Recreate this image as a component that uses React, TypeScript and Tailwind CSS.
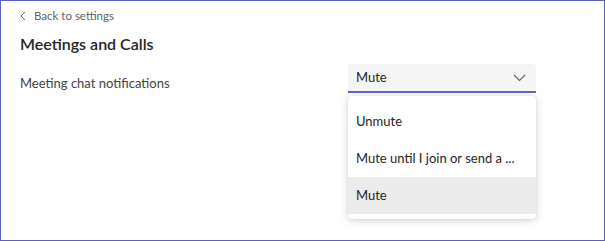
import React from "react";

export default function App() {
  return (
    <div className="w-[605px] h-[241px] bg-white border border-[#5b5fc0] relative overflow-hidden" style={{ fontFamily: "Lato, 'Noto Sans', sans-serif" }}>
      <div className="pl-[19px] pt-[8px]">
        <div className="flex items-center gap-[8px] h-[14px] text-[11.5px] text-[#616161]">
          <svg width="6" height="10" viewBox="0 0 6 10" className="ml-[0px]">
            <path d="M5 1 L1 5 L5 9" fill="none" stroke="#616161" strokeWidth="1" />
          </svg>
          <span>Back to settings</span>
        </div>
        <div className="mt-[10px] text-[16px] font-semibold text-[#242424] leading-[22px]">Meetings and Calls</div>
        <div className="mt-[9px] flex">
          <div className="w-[328px] pt-[10px] text-[13px] text-[#424242] leading-[18px]">Meeting chat notifications</div>
          <div className="w-[188px] relative">
            <div className="h-[29px] bg-[#f5f5f5] rounded-t-[4px] border-b-2 border-[#6264c7] flex items-center justify-between pl-[8px] pr-[10px] text-[13px] text-[#242424]">
              <span>Mute</span>
              <svg width="13" height="8" viewBox="0 0 13 8">
                <path d="M1 1 L6.5 6.5 L12 1" fill="none" stroke="#616161" strokeWidth="1.1" />
              </svg>
            </div>
            <div className="absolute left-0 top-[32px] w-[188px] bg-white rounded-[4px] shadow-[0_2px_8px_rgba(0,0,0,0.16),0_0_2px_rgba(0,0,0,0.12)] pt-[7px] pb-[5px] text-[13px] text-[#242424]">
              <div className="h-[37px] flex items-center pl-[8px]">Unmute</div>
              <div className="h-[37px] flex items-center pl-[8px]">Mute until I join or send a ...</div>
              <div className="h-[37px] flex items-center pl-[8px] bg-[#ebebeb]">Mute</div>
            </div>
          </div>
        </div>
      </div>
    </div>
  );
}
